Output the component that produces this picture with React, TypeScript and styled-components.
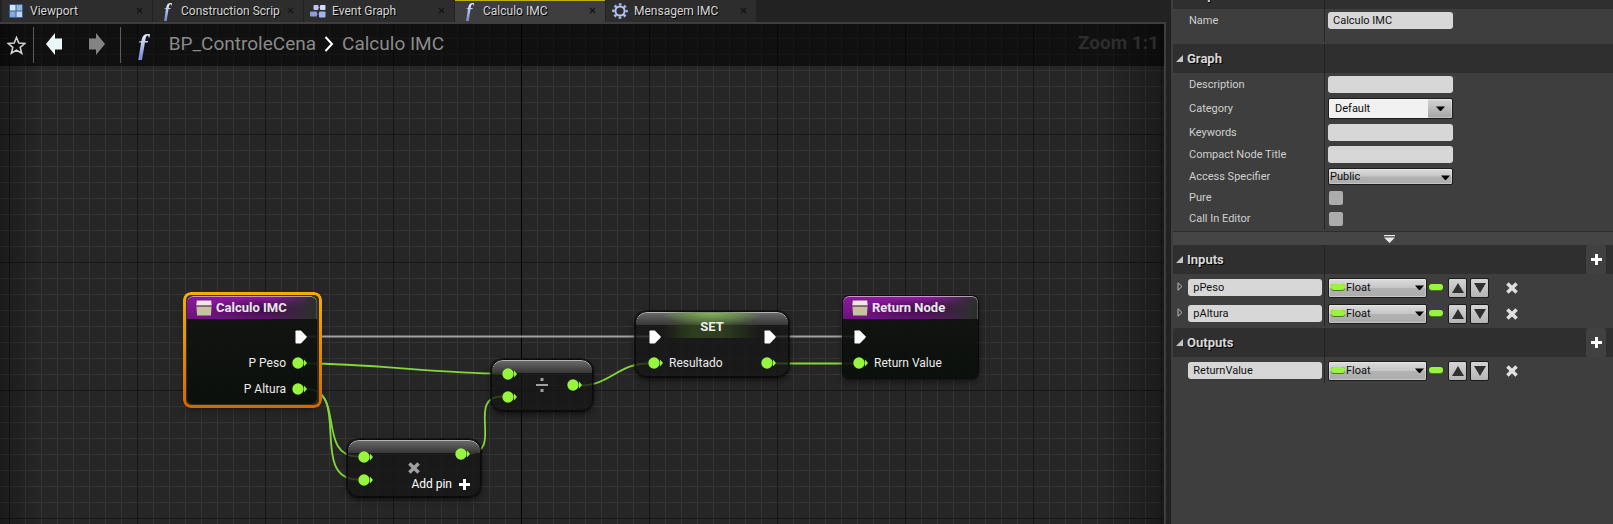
import React from "react";
import styled, { createGlobalStyle, css } from "styled-components";

const GlobalStyle = createGlobalStyle`
  *, *::before, *::after { box-sizing: border-box; }
  body {
    margin: 0;
    background: #222;
    color: #d2d2d2;
    font-family: Roboto, "Liberation Sans", sans-serif;
    font-size: 12px;
    line-height: 16px;
  }
  button, input, select { font: inherit; margin: 0; }
`;

const green = "#96f53c";
const panel = "#3e3e3e";

/* ---------- page frame ---------- */

const Page = styled.main`
  display: grid;
  grid-template-columns: minmax(0, 1fr) 442px;
  min-height: 100vh;
`;

const EditorColumn = styled.section`
  display: flex;
  flex-direction: column;
  min-width: 0;
  padding-right: 5px;
`;

const TabBar = styled.nav`
  display: flex;
  gap: 1px;
  height: 22px;
  padding-left: 2px;
`;

const Tab = styled.div<{ $active?: boolean }>`
  display: flex;
  align-items: center;
  width: 150px;
  padding: 0 9px 1px 6px;
  background: ${(p) => (p.$active ? panel : "#2d2d2d")};
  box-shadow: ${(p) => (p.$active ? "inset 0 1px 0 #c3ad10" : "none")};
`;

const TabButton = styled.button`
  display: flex;
  flex: 1;
  align-items: center;
  gap: 6px;
  min-width: 0;
  padding: 0;
  border: 0;
  background: none;
  color: #d6d6d6;
  text-align: left;
  text-shadow: 1px 1px 0 #000;
  white-space: nowrap;
`;

const TabIcon = styled.span`
  display: flex;
  flex: none;
  align-items: center;
  justify-content: center;
  width: 16px;
  height: 18px;
`;

const CloseButton = styled.button`
  display: flex;
  padding: 0;
  border: 0;
  background: none;
`;

const FunctionGlyph = styled.i<{ $size: number }>`
  padding: 0 4px;
  background: linear-gradient(#e4ecff 15%, #7f93d6 85%);
  background-clip: text;
  color: transparent;
  font-family: "Liberation Serif", serif;
  font-size: ${(p) => p.$size}px;
  font-weight: 700;
  line-height: 1;
  text-shadow: none;
`;

const GraphFrame = styled.div`
  display: flex;
  flex: 1;
  flex-direction: column;
  border: solid ${panel};
  border-width: 2px 2px 0 0;
  background-color: #262626;
  background-image:
    linear-gradient(90deg, rgba(0, 0, 0, 0.3), transparent 40px),
    linear-gradient(270deg, rgba(0, 0, 0, 0.3), transparent 60px),
    linear-gradient(#000, #000),
    linear-gradient(90deg, #161616 1px, transparent 1px),
    linear-gradient(#161616 1px, transparent 1px),
    linear-gradient(90deg, #343434 1px, transparent 1px),
    linear-gradient(#343434 1px, transparent 1px);
  background-repeat: no-repeat, no-repeat, no-repeat, repeat, repeat, repeat, repeat;
  background-size: 100% 100%, 100% 100%, 1px 100%, 128px 128px, 128px 128px, 16px 16px, 16px 16px;
  background-position: 0 0, 0 0, 521px 0, 9px 0, 0 110px, 9px 0, 0 14px;
`;

const GraphHeader = styled.header`
  display: flex;
  align-items: center;
  height: 42px;
  padding: 0 5px 0 7px;
  background: rgba(0, 0, 0, 0.56);
`;

const ToolButton = styled.button`
  display: flex;
  padding: 0;
  border: 0;
  background: none;
`;

const Divider = styled.span<{ $before: number; $after: number }>`
  width: 1px;
  height: 36px;
  margin: 0 ${(p) => p.$after}px 0 ${(p) => p.$before}px;
  background: #5a5a5a;
`;

const ToolPair = styled.div`
  display: flex;
  gap: 25px;
  padding-bottom: 2px;
`;

const Crumbs = styled.div`
  display: flex;
  align-items: center;
  gap: 8px;
  margin-left: 17px;
  padding-bottom: 2px;
  color: #8a8a8a;
  font-size: 19px;
  line-height: 24px;
  white-space: nowrap;
`;

const CrumbLink = styled.a`
  color: inherit;
  text-decoration: none;
`;

const ZoomLabel = styled.span`
  margin-left: auto;
  padding-bottom: 4px;
  color: #2d2d2d;
  font-size: 19px;
  font-weight: 700;
  line-height: 24px;
  white-space: nowrap;
`;

/* ---------- graph canvas ---------- */

const Canvas = styled.div`
  position: relative;
  flex: 1;
  min-height: 440px;
  overflow: hidden;
`;

const Wires = styled.svg`
  position: absolute;
  top: 0;
  left: 0;
  width: 1000px;
  height: 440px;
  fill: none;
  stroke: ${green};
  stroke-width: 1.8;
  opacity: 0.85;
`;

type Place = { $x: number; $y: number; $w: number };

const placed = css<Place>`
  position: absolute;
  left: ${(p) => p.$x}px;
  top: ${(p) => p.$y}px;
  width: ${(p) => p.$w}px;
  color: #ececec;
  font-size: 12px;
  white-space: nowrap;
`;

const EventNode = styled.article<Place & { $selected?: boolean }>`
  ${placed}
  padding-bottom: 2px;
  border-radius: 6px;
  background: linear-gradient(rgba(16, 18, 16, 0.86), rgba(9, 14, 9, 0.92));
  box-shadow: 0 0 0 1px #0a0a0a, 0 3px 6px rgba(0, 0, 0, 0.6);

  ${(p) =>
    p.$selected &&
    css`
      &::before {
        content: "";
        position: absolute;
        inset: -4px -5px -4px -4px;
        padding: 3px;
        border-radius: 8px;
        background: linear-gradient(#f4b000, #d06800);
        mask: linear-gradient(#000 0 0) content-box exclude, linear-gradient(#000 0 0);
      }
      box-shadow: 0 0 0 2px #3a2c10, 0 4px 8px rgba(0, 0, 0, 0.6);
    `}
`;

const NodeTitle = styled.h2`
  display: flex;
  align-items: center;
  gap: 4px;
  height: 23px;
  margin: 0 0 4px;
  padding-left: 9px;
  border-radius: 6px 6px 0 0;
  background:
    linear-gradient(100deg, transparent 62%, #2b2f2b 96%),
    radial-gradient(ellipse at 62% 60%, #35103c, transparent 60%),
    linear-gradient(#8a1a9c, #6d1180);
  box-shadow: inset 0 1px 0 rgba(225, 205, 225, 0.7), inset -1px 0 0 rgba(160, 160, 160, 0.3);
  color: #efe6ef;
  font-size: 13px;
  font-weight: 700;
`;

const CompactNode = styled.article<Place>`
  ${placed}
  border: 1px solid #0b0b0b;
  border-radius: 12px;
  background:
    linear-gradient(#6c6c6c, #363636 13px, transparent 13px),
    rgba(22, 22, 22, 0.78);
  box-shadow: inset 0 1px 0 #b4b4b4, 0 0 0 1px rgba(0, 0, 0, 0.5), 0 3px 6px rgba(0, 0, 0, 0.6);
`;

const PinRow = styled.div<{ $exec?: boolean; $out?: boolean; $inset?: number }>`
  display: flex;
  align-items: center;
  gap: 6px;
  justify-content: ${(p) => (p.$out ? "flex-end" : "flex-start")};
  height: ${(p) => (p.$exec ? 27 : 26)}px;
  padding: 0 ${(p) => p.$inset ?? 10}px;
`;

const PushRight = styled.span`
  display: flex;
  margin-left: auto;
`;

const SetHeader = styled.div`
  display: flex;
  align-items: flex-end;
  justify-content: space-between;
  height: 38px;
  padding: 0 12px 6px;
`;

const SetTitle = styled.h2`
  display: flex;
  align-items: center;
  justify-content: center;
  flex: 1;
  height: 26px;
  margin: 0;
  align-self: flex-start;
  padding-top: 4px;
  background:
    radial-gradient(ellipse at 50% 0, rgba(150, 220, 100, 0.65), transparent 75%) 0 1px / 100% 12px no-repeat,
    linear-gradient(90deg, transparent, rgba(70, 105, 35, 0.45) 30%, rgba(70, 105, 35, 0.45) 60%, transparent);
  font-size: 13px;
  font-weight: 700;
`;

const OperatorGrid = styled.div<{ $pad: number }>`
  display: grid;
  grid-template: 23px 23px / auto 1fr auto;
  align-items: center;
  padding: ${(p) => p.$pad}px 10px;
`;

const OperatorSymbol = styled.span`
  display: flex;
  grid-area: 1 / 1 / 3 / 4;
  place-self: center;
`;

const InPin = styled.span<{ $row: number }>`
  display: flex;
  grid-area: ${(p) => p.$row} / 1;
`;

const OutPin = styled.span<{ $rows: number }>`
  display: flex;
  grid-area: 1 / 3 / span ${(p) => p.$rows};
  padding-bottom: ${(p) => (p.$rows === 1 ? 6 : 0)}px;
`;

const AddPin = styled.button`
  display: flex;
  grid-area: 2 / 2 / 3 / 4;
  align-items: center;
  align-self: end;
  justify-self: end;
  gap: 7px;
  height: 14px;
  padding: 0;
  border: 0;
  background: none;
  color: #fff;
`;

/* ---------- details panel ---------- */

const Details = styled.aside`
  display: flex;
  flex-direction: column;
  padding-left: 2px;
  background: ${panel};
`;

const ClippedTop = styled.div`
  display: flex;
  align-items: flex-end;
  height: 9px;
  overflow: hidden;
`;

const SectionHeader = styled.header`
  display: grid;
  flex: none;
  grid-template-columns: 151px 1fr;
  width: 100%;
  height: 29px;
  border-radius: 3px 0 0 0;
  background: #2f2f2f;
`;

const SectionTitle = styled.h3`
  display: flex;
  align-items: center;
  gap: 4px;
  margin: 0;
  padding-left: 3px;
  color: #d8d8d8;
  font-size: 13px;
  font-weight: 700;
  text-shadow: 1px 1px 0 #000;
`;

const SectionSide = styled.div`
  display: flex;
  justify-content: flex-end;
  padding-right: 7px;
  border-left: 1px solid #222;
`;

const AddButton = styled.button`
  display: flex;
  align-items: center;
  justify-content: center;
  width: 20px;
  padding: 0;
  border: 0;
  border-radius: 3px;
  background: #414141;
`;

const Rows = styled.div<{ $tail?: number }>`
  display: flex;
  flex-direction: column;
  margin-bottom: 2px;
  padding-bottom: ${(p) => p.$tail ?? 0}px;
  background: linear-gradient(#262626, #262626) 151px 0 / 1px 100% no-repeat;
`;

const Row = styled.div<{ $h: number }>`
  display: grid;
  grid-template-columns: 155px 1fr;
  align-items: center;
  height: ${(p) => p.$h}px;
  padding-top: 1px;
`;

const RowLabel = styled.label`
  padding-left: 16px;
  color: #cfcfcf;
  font-size: 11px;
`;

const NameCell = styled.div`
  display: flex;
  align-items: center;
  gap: 4px;
  padding: 0 6px 0 4px;
`;

const ExpandSlot = styled.span`
  display: flex;
  width: 8px;
  padding-bottom: 2px;
`;

const TextBox = styled.input<{ $fill?: boolean }>`
  width: ${(p) => (p.$fill ? "100%" : "125px")};
  min-width: 0;
  height: 17px;
  padding: 0 5px;
  border: 0;
  border-radius: 3px;
  background: #d7d7d7;
  color: #111;
  font-size: 11px;
  line-height: 16px;
`;

const Tick = styled.input`
  appearance: none;
  width: 14px;
  height: 14px;
  margin-left: 1px;
  border-radius: 2px;
  background: #acacac;
`;

const SelectBox = styled.div<{ $w: number; $h: number; $light?: boolean }>`
  display: grid;
  align-items: center;
  width: ${(p) => p.$w}px;
  height: ${(p) => p.$h}px;
  border: 1px solid #1c1c1c;
  border-radius: 2px;
  background: ${(p) =>
    p.$light
      ? "linear-gradient(90deg, #f1f1f1 99px, transparent 99px), linear-gradient(#d4d4d4, #a4a4a4)"
      : "linear-gradient(#dcdcdc, #c6c6c6 48%, #b2b2b2 52%, #acacac)"};
  box-shadow: inset 0 0 0 1px rgba(255, 255, 255, 0.3);

  > * { grid-area: 1 / 1; }
  > svg { pointer-events: none; }
`;

const Select = styled.select<{ $inset: number }>`
  appearance: none;
  width: 100%;
  height: 100%;
  padding: 0 16px 0 ${(p) => p.$inset}px;
  border: 0;
  background: none;
  color: #0c0c0c;
  font-size: 11px;
  line-height: 16px;
`;

const CaretSvg = styled.svg<{ $right: number }>`
  justify-self: end;
  margin-right: ${(p) => p.$right}px;
`;

const Pill = styled.svg`
  margin-left: 2px;
`;

const Controls = styled.div`
  display: flex;
  align-items: center;
`;

const MoveButtons = styled.div`
  display: flex;
  gap: 3px;
  margin-left: 5px;
`;

const MoveButton = styled.button`
  display: flex;
  align-items: center;
  justify-content: center;
  width: 19px;
  height: 20px;
  padding: 0;
  border: 1px solid #1c1c1c;
  border-radius: 2px;
  background: linear-gradient(#d4d4d4, #b4b4b4);
`;

const RemoveButton = styled.button`
  display: flex;
  margin-left: 17px;
  padding: 0;
  border: 0;
  background: none;
`;

const AdvancedToggle = styled.button`
  display: flex;
  align-items: center;
  justify-content: center;
  height: 14px;
  padding: 0 8px 0 0;
  border: 0;
  border-top: 1px solid #2e2e2e;
  background: #454545;
`;

/* ---------- drawings ---------- */

const ValuePin = () => (
  <svg width="15" height="12" viewBox="0 0 15 12" aria-hidden="true">
    <circle cx="6" cy="6" r="5.7" fill={green} />
    <path d="M12 2.5 15 6 12 9.5Z" fill={green} />
  </svg>
);

const ExecPin = ({ out }: { out?: boolean }) => (
  <svg width="15" height="14" viewBox={out ? "-2 0 15 14" : "0 0 15 14"} aria-hidden="true">
    <path d="M1.5 1.2Q1.5.5 2.2.5H6.8L12.5 6.2V7.8L6.8 13.5H2.2Q1.5 13.5 1.5 12.8Z" fill="#fff" />
  </svg>
);

const NodeIcon = () => (
  <svg width="16" height="16" viewBox="0 0 16 16" aria-hidden="true">
    <path d="M.8.5H15.200L15.700 5.500H.3Z" fill="#ece9e0" />
    <path d="M.5 6.500H15.500L15 15.500H1Z" fill="#c9c0a4" />
    <path d="M.5 5.500H15.500V6.600H.5Z" fill="#6b6256" />
  </svg>
);

const ViewportIcon = () => (
  <svg width="14" height="14" viewBox="0 0 14 14" aria-hidden="true">
    <rect width="14" height="14" rx="1" fill="#3f5f94" />
    <rect x="1" y="1" width="5.5" height="5.5" fill="#cfe9f7" />
    <rect x="7.5" y="1" width="5.5" height="5.5" fill="#93b9e0" />
    <rect x="1" y="7.5" width="5.5" height="5.5" fill="#86a8e0" />
    <rect x="7.5" y="7.5" width="5.5" height="5.5" fill="#c5d2f3" />
  </svg>
);

const GraphIcon = () => (
  <svg width="16" height="14" viewBox="0 0 16 14" aria-hidden="true">
    <path d="M5 3.5H12M4 10H12" stroke="#5a6bb0" />
    <rect x="3.5" y="1" width="5" height="5" rx="1" fill="#b9c6f2" />
    <rect x="10" y="1" width="5.5" height="5" rx="1" fill="#d3dcfa" />
    <rect x="0" y="7.5" width="7" height="5" rx="1" fill="#8c9cdc" />
    <rect x="9" y="7.5" width="6.5" height="6" rx="1" fill="#a5b3ea" />
  </svg>
);

const GearIcon = () => (
  <svg width="16" height="16" viewBox="0 0 16 16" aria-hidden="true">
    <circle cx="8" cy="8" r="6.6" fill="none" stroke="#a9b8f0" strokeWidth="2.4" strokeDasharray="2.6 2.58" strokeDashoffset="1.3" />
    <circle cx="8" cy="8" r="4.6" fill="none" stroke="#b5c2f4" strokeWidth="2" />
  </svg>
);

const CloseIcon = () => (
  <svg width="7" height="7" viewBox="0 0 7 7" aria-hidden="true">
    <path d="M1 1 6 6M6 1 1 6" stroke="#141414" strokeWidth="1.2" />
  </svg>
);

const StarIcon = () => (
  <svg width="19" height="19" viewBox="0 0 19 19" aria-hidden="true">
    <path
      d="M9.5 1.5 11.8 7.1 17.8 7.5 13.2 11.4 14.7 17.3 9.5 14.1 4.3 17.3 5.8 11.4 1.2 7.5 7.2 7.1Z"
      fill="none"
      stroke="#d0d0d0"
      strokeWidth="1.6"
    />
  </svg>
);

const ArrowIcon = ({ forward }: { forward?: boolean }) => (
  <svg width="17" height="22" viewBox="0 0 17 22" aria-hidden="true">
    <path
      d={forward ? "M17 11 8 0V5.500H1V16.500H8V22Z" : "M0 11 9 0V5.500H16V16.500H9V22Z"}
      fill={forward ? "#838383" : "#e9f7f7"}
    />
  </svg>
);

const PlusIcon = () => (
  <svg width="11" height="11" viewBox="0 0 11 11" aria-hidden="true">
    <path d="M5.500 0V11M0 5.500H11" stroke="#fff" strokeWidth="3" />
  </svg>
);

const CrossIcon = ({ size, color }: { size: number; color: string }) => (
  <svg width={size} height={size} viewBox="0 0 11 11" aria-hidden="true">
    <path d="M1.300 1.300 9.700 9.700M9.700 1.300 1.300 9.700" stroke={color} strokeWidth="3.2" />
  </svg>
);

const DivideIcon = () => (
  <svg width="12" height="14" viewBox="0 0 12 14" aria-hidden="true">
    <path d="M0 6H12V8H0ZM4.500 0H7.500V3H4.500ZM4.500 11H7.500V14H4.500Z" fill="#a0a0a0" />
  </svg>
);

const Caret = ({ right }: { right: number }) => (
  <CaretSvg $right={right} width="9" height="5" viewBox="0 0 9 5" aria-hidden="true">
    <path d="M0 .5H9L5 5H4Z" fill="#000" />
  </CaretSvg>
);

const TypePill = () => (
  <Pill width="14" height="7" viewBox="0 0 14 7" aria-hidden="true">
    <rect width="14" height="7" rx="3" fill="#4e7a28" />
    <rect width="14" height="6" rx="3" fill={green} />
  </Pill>
);

const ExpandedMark = () => (
  <svg width="7" height="7" viewBox="0 0 7 7" aria-hidden="true">
    <path d="M7 0V7H0Z" fill="#c4c4c4" />
  </svg>
);

const CollapsedMark = () => (
  <svg width="6" height="9" viewBox="0 0 6 9" aria-hidden="true">
    <path d="M1 .8 5 4.500 1 8.200Z" fill="none" stroke="#b8b8b8" />
  </svg>
);

/* ---------- composed parts ---------- */

const tabs = [
  { label: "Viewport", icon: <ViewportIcon /> },
  { label: "Construction Scrip", icon: <FunctionGlyph $size={20} aria-hidden="true">f</FunctionGlyph> },
  { label: "Event Graph", icon: <GraphIcon /> },
  { label: "Calculo IMC", icon: <FunctionGlyph $size={20} aria-hidden="true">f</FunctionGlyph>, active: true },
  { label: "Mensagem IMC", icon: <GearIcon /> },
];

const Section = ({ title, addable }: { title: string; addable?: boolean }) => (
  <SectionHeader>
    <SectionTitle>
      <ExpandedMark />
      {title}
    </SectionTitle>
    <SectionSide>
      {addable && (
        <AddButton aria-label={`Add to ${title}`}>
          <PlusIcon />
        </AddButton>
      )}
    </SectionSide>
  </SectionHeader>
);

const TextRow = ({ id, label, value = "" }: { id: string; label: string; value?: string }) => (
  <Row $h={22}>
    <RowLabel htmlFor={id}>{label}</RowLabel>
    <TextBox id={id} defaultValue={value} />
  </Row>
);

const CheckRow = ({ id, label }: { id: string; label: string }) => (
  <Row $h={21}>
    <RowLabel htmlFor={id}>{label}</RowLabel>
    <Tick type="checkbox" id={id} />
  </Row>
);

const ParamRow = ({ name, expandable }: { name: string; expandable?: boolean }) => (
  <Row $h={26}>
    <NameCell>
      <ExpandSlot>{expandable && <CollapsedMark />}</ExpandSlot>
      <TextBox $fill aria-label="Parameter name" defaultValue={name} />
    </NameCell>
    <Controls>
      <SelectBox $w={99} $h={20}>
        <Select $inset={17} aria-label={`${name} type`}>
          <option>Float</option>
        </Select>
        <TypePill />
        <Caret right={2} />
      </SelectBox>
      <TypePill />
      <MoveButtons>
        <MoveButton aria-label={`Move ${name} up`}>
          <svg width="12" height="10" viewBox="0 0 12 10"><path d="M6 0 12 10H0Z" fill="#303030" /></svg>
        </MoveButton>
        <MoveButton aria-label={`Move ${name} down`}>
          <svg width="12" height="10" viewBox="0 0 12 10"><path d="M0 0H12L6 10Z" fill="#303030" /></svg>
        </MoveButton>
      </MoveButtons>
      <RemoveButton aria-label={`Remove ${name}`}>
        <CrossIcon size={12} color="#e0e0e0" />
      </RemoveButton>
    </Controls>
  </Row>
);

export default function App() {
  return (
    <>
      <GlobalStyle />
      <Page>
        <EditorColumn>
          <TabBar>
            {tabs.map((t) => (
              <Tab key={t.label} $active={t.active}>
                <TabButton>
                  <TabIcon>{t.icon}</TabIcon>
                  {t.label}
                </TabButton>
                <CloseButton aria-label={`Close ${t.label}`}>
                  <CloseIcon />
                </CloseButton>
              </Tab>
            ))}
          </TabBar>
          <GraphFrame>
            <GraphHeader>
              <ToolButton aria-label="Favorite">
                <StarIcon />
              </ToolButton>
              <Divider $before={7} $after={12} />
              <ToolPair>
                <ToolButton aria-label="Back">
                  <ArrowIcon />
                </ToolButton>
                <ToolButton aria-label="Forward">
                  <ArrowIcon forward />
                </ToolButton>
              </ToolPair>
              <Divider $before={15} $after={13} />
              <FunctionGlyph $size={29} aria-hidden="true">f</FunctionGlyph>
              <Crumbs>
                <CrumbLink href="#blueprint">BP_ControleCena</CrumbLink>
                <svg width="10" height="16" viewBox="0 0 10 16" aria-hidden="true">
                  <path d="M1.500 1 8 8 1.500 15" fill="none" stroke="#fff" strokeWidth="2" />
                </svg>
                <CrumbLink href="#function">Calculo IMC</CrumbLink>
              </Crumbs>
              <ZoomLabel>Zoom 1:1</ZoomLabel>
            </GraphHeader>

            <Canvas>
              <Wires aria-hidden="true">
                <path d="M307 270.500H649M776 270.500H855" stroke="#b8b8b8" />
                <path d="M306 297.500C370 297.500 440 307.500 502 307.500" />
                <path d="M306 323C346 323 316 390.500 358 390.500" />
                <path d="M306 323C352 323 308 413.500 358 413.500" />
                <path d="M468 387.500C505 387.500 465 330.500 502 330.500" />
                <path d="M580 319.500C610 319.500 618 297.500 648 297.500" />
                <path d="M774 297.500H855" />
              </Wires>

              <EventNode $x={187} $y={230} $w={130} $selected>
                <NodeTitle><NodeIcon />Calculo IMC</NodeTitle>
                <PinRow $exec $out><ExecPin out /></PinRow>
                <PinRow $out>P Peso<ValuePin /></PinRow>
                <PinRow $out>P Altura<ValuePin /></PinRow>
              </EventNode>

              <CompactNode $x={347} $y={373} $w={134}>
                <OperatorGrid $pad={5}>
                  <InPin $row={1}><ValuePin /></InPin>
                  <InPin $row={2}><ValuePin /></InPin>
                  <OperatorSymbol><CrossIcon size={12} color="#a0a0a0" /></OperatorSymbol>
                  <OutPin $rows={1}><ValuePin /></OutPin>
                  <AddPin>Add pin<PlusIcon /></AddPin>
                </OperatorGrid>
              </CompactNode>

              <CompactNode $x={491} $y={293} $w={102}>
                <OperatorGrid $pad={2}>
                  <InPin $row={1}><ValuePin /></InPin>
                  <InPin $row={2}><ValuePin /></InPin>
                  <OperatorSymbol><DivideIcon /></OperatorSymbol>
                  <OutPin $rows={2}><ValuePin /></OutPin>
                </OperatorGrid>
              </CompactNode>

              <CompactNode $x={635} $y={245} $w={154}>
                <SetHeader>
                  <ExecPin />
                  <SetTitle>SET</SetTitle>
                  <ExecPin out />
                </SetHeader>
                <PinRow $inset={12}>
                  <ValuePin />
                  Resultado
                  <PushRight><ValuePin /></PushRight>
                </PinRow>
              </CompactNode>

              <EventNode $x={843} $y={230} $w={135}>
                <NodeTitle><NodeIcon />Return Node</NodeTitle>
                <PinRow $exec><ExecPin /></PinRow>
                <PinRow><ValuePin />Return Value</PinRow>
              </EventNode>
            </Canvas>
          </GraphFrame>
        </EditorColumn>

        <Details>
          <ClippedTop>
            <Section title="Graph" />
          </ClippedTop>
          <Rows $tail={11}>
            <TextRow id="name" label="Name" value="Calculo IMC" />
          </Rows>

          <Section title="Graph" />
          <Rows>
            <TextRow id="description" label="Description" />
            <Row $h={26}>
              <RowLabel htmlFor="category">Category</RowLabel>
              <SelectBox $w={125} $h={21} $light>
                <Select id="category" $inset={6}>
                  <option>Default</option>
                </Select>
                <Caret right={7} />
              </SelectBox>
            </Row>
            <TextRow id="keywords" label="Keywords" />
            <TextRow id="compact" label="Compact Node Title" />
            <Row $h={22}>
              <RowLabel htmlFor="access">Access Specifier</RowLabel>
              <SelectBox $w={125} $h={17}>
                <Select id="access" $inset={1}>
                  <option>Public</option>
                </Select>
                <Caret right={2} />
              </SelectBox>
            </Row>
            <CheckRow id="pure" label="Pure" />
            <CheckRow id="callInEditor" label="Call In Editor" />
          </Rows>
          <AdvancedToggle aria-label="Show advanced">
            <svg width="11" height="8" viewBox="0 0 11 8" aria-hidden="true">
              <path d="M0 0H11V1.200H0ZM0 2.500H11L5.500 8Z" fill="#e8e8e8" />
            </svg>
          </AdvancedToggle>

          <Section title="Inputs" addable />
          <Rows>
            <ParamRow name="pPeso" expandable />
            <ParamRow name="pAltura" expandable />
          </Rows>

          <Section title="Outputs" addable />
          <Rows>
            <ParamRow name="ReturnValue" />
          </Rows>
        </Details>
      </Page>
    </>
  );
}
